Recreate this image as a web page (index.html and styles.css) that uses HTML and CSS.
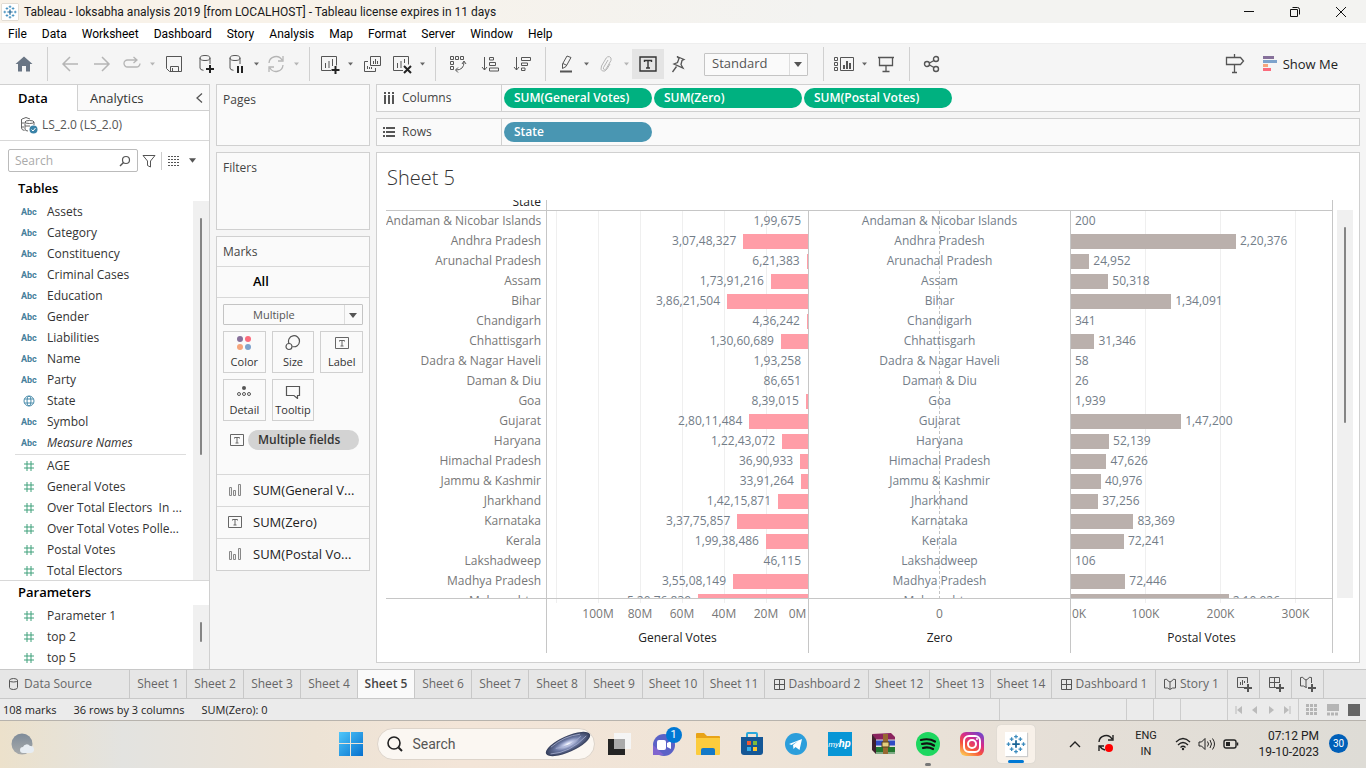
FILE: index.html
```html
<!DOCTYPE html>
<html lang="en">
<head>
<meta charset="utf-8">
<title>Tableau - loksabha analysis 2019</title>
<link rel="stylesheet" href="styles.css">
</head>
<body>
<svg class="defs" aria-hidden="true">
  <symbol id="caret" viewBox="0 0 8 5"><path d="M0 0h8L4 5z" fill="currentColor"/></symbol>
  <symbol id="hash" viewBox="0 0 12 12"><path d="M4 1v10M8 1v10M1 4h10M1 8h10" stroke="#3fa07a" fill="none"/></symbol>
  <symbol id="textmark" viewBox="0 0 14 12"><path d="M.5.5h13v11H.5z M4.500 4.500V3.500h5v1M7 3.500V9M5.500 9h3" stroke="#666" fill="none"/></symbol>
  <symbol id="bars" viewBox="0 0 14 14"><path d="M1.500 4.500h2v8h-2zM5.500 7.500h2v5h-2zM10.500 1.500h2v11h-2z" stroke="#888" fill="#eee"/></symbol>
  <symbol id="grid" viewBox="0 0 12 12"><path d="M1.500 1.500h10v10h-10zM6.500 1.500v10M1.500 6.500h10" stroke="#555" fill="none"/></symbol>
  <symbol id="tableau" viewBox="0 0 16 16"><path d="M8 5v6M5 8h6" stroke="#1c6596" stroke-width="1.400"/><path d="M8 .5v3M6.500 2h3M8 12.500v3M6.500 14h3M.5 8h3M2 6.500v3M12.500 8h3M14 6.500v3M4.500 2.500v3M3 4h3M11.500 2.500v3M10 4h3M4.500 10.500v3M3 12h3M11.500 10.500v3M10 12h3" stroke="#3b8bbd"/></symbol>
</svg>

<header class="titlebar">
  <span class="app-icon"><svg width="14" height="14"><use href="#tableau"/></svg></span>
  <h1>Tableau - loksabha analysis 2019 [from LOCALHOST] - Tableau license expires in 11 days</h1>
  <div class="window-buttons">
    <button aria-label="Minimize"><svg width="12" height="12"><path d="M1 5.500h10" stroke="#111"/></svg></button>
    <button aria-label="Restore"><svg width="12" height="12"><path d="M1.500 3.500h7v7h-7z" fill="none" stroke="#111"/><path d="M3.500 1.500h5q2 0 2 2v5" fill="none" stroke="#111"/></svg></button>
    <button aria-label="Close"><svg width="12" height="12"><path d="M1 1l10 10M11 1L1 11" stroke="#111"/></svg></button>
  </div>
</header>

<nav class="menubar">
  <button>File</button><button>Data</button><button>Worksheet</button><button>Dashboard</button><button>Story</button><button>Analysis</button><button>Map</button><button>Format</button><button>Server</button><button>Window</button><button>Help</button>
</nav>

<div class="toolbar">
  <button class="tool home" aria-label="Start page"><svg width="18" height="18"><path d="M9 1.500L17.500 9H15v7.500h-4V11H7v5.500H3V9H.5z" fill="#697584"/></svg></button>
  <i class="sep first"></i>
  <button class="tool faint" aria-label="Undo"><svg width="18" height="18"><path d="M17 9H2M9 2L2 9l7 7" stroke-width="1.500"/></svg></button>
  <button class="tool faint" aria-label="Redo"><svg width="18" height="18"><path d="M1 9h15M9 2l7 7-7 7" stroke-width="1.500"/></svg></button>
  <button class="tool drop faint" aria-label="Replay"><svg width="20" height="18"><path d="M14 5H5.500a3.500 3.500 0 0 0 0 7h9a3.500 3.500 0 0 0 3.500-3.500M11.500 2L15 5l-3.500 3" stroke-width="1.300"/></svg></button><button class="arrow faint" aria-label="Replay options"><svg><use href="#caret"/></svg></button>
  <button class="tool" aria-label="Save"><svg width="18" height="18"><path d="M1.500 1.500h15v15h-12l-3-3zM5.500 16.500v-5h8v5M7.500 13v3.500"/></svg></button>
  <button class="tool" aria-label="New data source"><svg width="18" height="20"><ellipse cx="8" cy="4" rx="5" ry="2.500"/><path d="M3 4v10q0 2 3.500 2.300M13 4v6"/><path d="M13 11v8M9 15h8" stroke="#222" stroke-width="2"/></svg></button>
  <button class="tool drop" aria-label="Pause updates"><svg width="18" height="20"><ellipse cx="8" cy="4" rx="5" ry="2.500"/><path d="M3 4v10q0 2 3.500 2.300M13 4v6"/><path d="M11 12v7M15 12v7" stroke="#222" stroke-width="2"/></svg></button><button class="arrow" aria-label="Update options"><svg><use href="#caret"/></svg></button>
  <button class="tool drop faint" aria-label="Run update"><svg width="18" height="18"><path d="M2 8a7 7 0 0 1 13-3M16 10a7 7 0 0 1-13 3M16 1v5h-5M2 17v-5h5" stroke-width="1.300"/></svg></button><button class="arrow faint" aria-label="Run options"><svg><use href="#caret"/></svg></button>
  <i class="sep"></i>
  <button class="tool drop" aria-label="New worksheet"><svg width="20" height="20"><path d="M11 16.500H1.500v-14h15v9M5.500 9v5M9 7v7M12.500 5v7"/><path d="M15.500 12v8M11.500 16h8" stroke="#222" stroke-width="2"/></svg></button><button class="arrow" aria-label="New sheet options"><svg><use href="#caret"/></svg></button>
  <button class="tool" aria-label="Duplicate"><svg width="18" height="18"><path d="M7.500 1.500h10v9h-10zM10.500 9V6M12.500 9V4M14.500 9V6M5 6.500H1.500v10h11V13M4.500 14v-3M6.500 14v-2M8.500 14v-2"/></svg></button>
  <button class="tool drop" aria-label="Clear sheet"><svg width="20" height="20"><path d="M11 16.500H1.500v-14h15v8M5.500 9v5M9 7v7M12.500 5v4"/><path d="M12 12l7 7M19 12l-7 7" stroke="#222" stroke-width="2"/></svg></button><button class="arrow" aria-label="Clear options"><svg><use href="#caret"/></svg></button>
  <i class="sep"></i>
  <button class="tool" aria-label="Swap rows and columns"><svg width="18" height="18"><path d="M1.500 1.500h3v3h-3zM6.500 1.500h3v3h-3zM11.500 1.500h3v3h-3zM1.500 6.500h3v3h-3zM1.500 11.500h3v3h-3zM7 15q8 0 8-8M13 9l2-3 2 3M9 12.500L6.500 15 9 17.500"/></svg></button>
  <button class="tool" aria-label="Sort ascending"><svg width="18" height="18"><path d="M3.500 2v13M1 12l2.500 3L6 12M8.500 2.500h4v2.500h-4zM8.500 7.500h6v3h-6zM8.500 13h9v3h-9z"/></svg></button>
  <button class="tool" aria-label="Sort descending"><svg width="18" height="18"><path d="M3.500 2v13M1 12l2.500 3L6 12M8.500 2.500h9v3h-9zM8.500 8h6v2.500h-6zM8.500 13h3.500v2.500H8.500z"/></svg></button>
  <i class="sep"></i>
  <button class="tool drop" aria-label="Highlight"><svg width="16" height="20"><path d="M9 2l4 1.500-5 9-3.500 2V10zM5 9.500l4 2"/><path d="M2 17.500h12" stroke-width="2"/></svg></button><button class="arrow" aria-label="Highlight options"><svg><use href="#caret"/></svg></button>
  <button class="tool drop faint" aria-label="Group members"><svg width="16" height="18"><path d="M10 5L5.500 12.500q-.5 2 1 2.200 1 0 1.800-1.200L13 5.500q.8-3-1.500-3.800-2-.5-3.300 1.300L3.500 11q-1.500 4 1 5 2.500 1 4.500-2l3-5"/></svg></button><button class="arrow faint" aria-label="Group options"><svg><use href="#caret"/></svg></button>
  <button class="tool pressed" aria-label="Show mark labels" aria-pressed="true"><svg width="18" height="16"><path d="M1 1h16v14H1zM5.500 6V4.500h7V6M9 4.500V12M7 12h4" stroke="#333" stroke-width="1.400"/></svg></button>
  <button class="tool drop" aria-label="Fix axes"><svg width="16" height="18"><path d="M7 1.500l7 3-2 1-1 4 2 3.500-9-4 3.500-1.500 1.500-4zM6.500 11.500L2.500 17" stroke-width="1.300"/></svg></button>
  <div class="select fit"><select aria-label="Fit"><option>Standard</option></select><svg><use href="#caret"/></svg></div>
  <i class="sep after-select"></i>
  <button class="tool drop" aria-label="Show cards"><svg width="22" height="18"><path d="M1.500 2.500h3v3h-3zM1.500 7.500h3v3h-3zM1.500 12.500h3v3h-3zM7.500 2.500h13v13h-13z"/><path d="M11 14v-4M14 14V6M17 14V8" stroke-width="2"/></svg></button><button class="arrow" aria-label="Card options"><svg><use href="#caret"/></svg></button>
  <button class="tool" aria-label="Presentation mode"><svg width="18" height="18"><path d="M1 2.500h16M2.500 2.500v8h13v-8M9 10.500V16M5.500 16.500h7" stroke-width="1.300"/></svg></button>
  <i class="sep"></i>
  <button class="tool" aria-label="Share"><svg width="18" height="18"><g stroke-width="1.400"><circle cx="4" cy="9" r="2.500"/><circle cx="13" cy="4" r="2.500"/><circle cx="13" cy="14" r="2.500"/><path d="M6.500 8L11 5.500M6.500 10L11 12.500"/></g></svg></button>
  <span class="grow"></span>
  <button class="tool" aria-label="Guide"><svg width="20" height="20"><path d="M9.500 0v3M1.500 3.500h14l3 3.500-3 3.500h-14zM9.500 10.500v8M7 18.500h5" stroke-width="1.300"/></svg></button>
  <button class="show-me"><svg width="14" height="16"><path d="M0 0h11v3H0z" fill="#86709a"/><path d="M0 4h14v3H0z" fill="#7ea3cc"/><path d="M0 8h5v3H0z" fill="#f6a57c"/><path d="M0 12h8v3H0z" fill="#fb6b7c"/></svg>Show Me</button>
</div>

<main class="workspace">
  <aside class="data-pane">
    <div class="pane-tabs"><button class="active">Data</button><button>Analytics</button><button class="collapse" aria-label="Collapse pane"><svg width="8" height="12"><path d="M7 1.500L2 6l5 4.500" fill="none" stroke="#555" stroke-width="1.300"/></svg></button></div>
    <button class="source"><svg width="18" height="18" fill="none" stroke="#666"><path d="M2 3q4-3 8 0M1.500 3v9q0 2 3 2.500M2 7h2M2 11h2M5 6q0-1.500 4.500-1.500T14 6v3M5 6q0 1.500 4.500 1.500T14 6M5 6v7q0 2 3 2M5 10h5"/><circle cx="13.500" cy="13.500" r="4" fill="#3a83a8" stroke="none"/><path d="M11.500 13.500l1.500 1.500 2.500-3" stroke="#fff"/></svg>LS_2.0 (LS_2.0)</button>
    <div class="finder">
      <div class="search-field"><input type="text" placeholder="Search" aria-label="Search fields"><svg width="12" height="12"><circle cx="7" cy="5" r="3.500" fill="none" stroke="#555" stroke-width="1.200"/><path d="M4.500 7.500L1 11" stroke="#555" stroke-width="1.500"/></svg></div>
      <button aria-label="Filter fields"><svg width="14" height="14"><path d="M1 1.500h12L8.500 7v6l-3-1.500V7z" fill="none" stroke="#555"/></svg></button>
      <i></i>
      <button class="view" aria-label="View as list"><svg width="12" height="10"><path d="M0 .5h12M0 3.500h12M0 6.500h12M0 9.500h12" stroke="#555" stroke-dasharray="2 1"/></svg><svg class="small-caret"><use href="#caret"/></svg></button>
    </div>
    <h2>Tables</h2>
    <div class="scroller fields">
      <div class="list">
        <ul>
          <li><b>Abc</b>Assets</li><li><b>Abc</b>Category</li><li><b>Abc</b>Constituency</li><li><b>Abc</b>Criminal Cases</li><li><b>Abc</b>Education</li><li><b>Abc</b>Gender</li><li><b>Abc</b>Liabilities</li><li><b>Abc</b>Name</li><li><b>Abc</b>Party</li>
          <li><svg width="12" height="12" fill="none" stroke="#4a8cab"><circle cx="6" cy="6" r="5"/><ellipse cx="6" cy="6" rx="2" ry="5"/><path d="M1.500 4h9M1.500 8h9"/></svg>State</li>
          <li><b>Abc</b>Symbol</li><li><b>Abc</b><em>Measure Names</em></li>
        </ul>
        <ul class="measures">
          <li><svg><use href="#hash"/></svg>AGE</li><li><svg><use href="#hash"/></svg>General Votes</li><li><svg><use href="#hash"/></svg>Over Total Electors&nbsp; In ...</li><li><svg><use href="#hash"/></svg>Over Total Votes Polle...</li><li><svg><use href="#hash"/></svg>Postal Votes</li><li><svg><use href="#hash"/></svg>Total Electors</li>
        </ul>
      </div>
      <div class="track"><i class="thumb"></i></div>
    </div>
    <h2 class="params-title">Parameters</h2>
    <div class="scroller params">
      <div class="list"><ul><li><svg><use href="#hash"/></svg>Parameter 1</li><li><svg><use href="#hash"/></svg>top 2</li><li><svg><use href="#hash"/></svg>top 5</li></ul></div>
      <div class="track"><i class="thumb"></i></div>
    </div>
  </aside>

  <section class="cards">
    <div class="card pages"><h3>Pages</h3></div>
    <div class="card filters"><h3>Filters</h3></div>
    <div class="card marks">
      <h3>Marks</h3>
      <button class="mark-all">All</button>
      <div class="mark-body">
        <div class="select type"><select aria-label="Mark type"><option>Multiple</option></select><svg><use href="#caret"/></svg></div>
        <div class="mark-grid">
          <button><svg width="16" height="16"><circle cx="4" cy="4" r="3" fill="#86709a"/><circle cx="12" cy="4" r="3" fill="#fb6b7c"/><circle cx="4" cy="12" r="3" fill="#f6a57c"/><circle cx="12" cy="12" r="3" fill="#7ea3cc"/></svg>Color</button>
          <button><svg width="16" height="16" fill="none" stroke="#555" stroke-width="1.200"><path d="M4 8.500A5.500 5.500 0 1 1 7.500 11.500"/><circle cx="4" cy="11.500" r="3"/></svg>Size</button>
          <button><svg width="14" height="16" viewBox="0 0 14 12"><use href="#textmark"/></svg>Label</button>
          <button><svg width="16" height="16" fill="none" stroke="#555"><circle cx="8" cy="5" r="2" fill="#555" stroke="none"/><circle cx="3" cy="11" r="1.500"/><circle cx="8" cy="11" r="1.500"/><circle cx="13" cy="11" r="1.500"/></svg>Detail</button>
          <button><svg width="16" height="16"><path d="M1.500 3.500h13v9h-2v3l-3.500-3H1.500z" fill="none" stroke="#555" stroke-width="1.200"/></svg>Tooltip</button>
        </div>
        <div class="label-row"><svg width="14" height="12"><use href="#textmark"/></svg><button class="pill grey">Multiple fields</button></div>
      </div>
      <button class="layer"><svg width="14" height="14"><use href="#bars"/></svg>SUM(General V...</button>
      <button class="layer"><svg width="14" height="12"><use href="#textmark"/></svg>SUM(Zero)</button>
      <button class="layer"><svg width="14" height="14"><use href="#bars"/></svg>SUM(Postal Vo...</button>
    </div>
  </section>

  <section class="view-area">
    <div class="shelf"><h3><svg width="12" height="12" stroke="#555" stroke-width="2"><path d="M2 0v2M6 0v2M10 0v2M2 3v9M6 3v9M10 3v9"/></svg>Columns</h3><button class="pill green">SUM(General Votes)</button><button class="pill green">SUM(Zero)</button><button class="pill green">SUM(Postal Votes)</button></div>
    <div class="shelf"><h3><svg width="12" height="12" stroke="#555" stroke-width="2"><path d="M0 2h2M0 6h2M0 10h2M3 2h9M3 6h9M3 10h9"/></svg>Rows</h3><button class="pill blue">State</button></div>
    <div class="sheet">
      <h2>Sheet 5</h2>
      <div class="viz">
        <div class="chart">
          <div class="plot">
          <table>
            <thead><tr><th class="state"><div>State</div></th><th></th><th></th><th></th></tr></thead>
            <tbody>
              <tr><th>Andaman &amp; Nicobar Islands</th><td class="gen"><div>1,99,675<i style="width:0%"></i></div></td><td class="zero">Andaman &amp; Nicobar Islands</td><td class="post"><div><i style="width:0%"></i>200</div></td></tr>
              <tr><th>Andhra Pradesh</th><td class="gen"><div>3,07,48,327<i style="width:24.8%"></i></div></td><td class="zero">Andhra Pradesh</td><td class="post"><div><i style="width:63.2%"></i>2,20,376</div></td></tr>
              <tr><th>Arunachal Pradesh</th><td class="gen"><div>6,21,383<i style="width:0.5%"></i></div></td><td class="zero">Arunachal Pradesh</td><td class="post"><div><i style="width:7%"></i>24,952</div></td></tr>
              <tr><th>Assam</th><td class="gen"><div>1,73,91,216<i style="width:14.2%"></i></div></td><td class="zero">Assam</td><td class="post"><div><i style="width:14.3%"></i>50,318</div></td></tr>
              <tr><th>Bihar</th><td class="gen"><div>3,86,21,504<i style="width:31%"></i></div></td><td class="zero">Bihar</td><td class="post"><div><i style="width:38.4%"></i>1,34,091</div></td></tr>
              <tr><th>Chandigarh</th><td class="gen"><div>4,36,242<i style="width:0.4%"></i></div></td><td class="zero">Chandigarh</td><td class="post"><div><i style="width:0%"></i>341</div></td></tr>
              <tr><th>Chhattisgarh</th><td class="gen"><div>1,30,60,689<i style="width:10.4%"></i></div></td><td class="zero">Chhattisgarh</td><td class="post"><div><i style="width:9%"></i>31,346</div></td></tr>
              <tr><th>Dadra &amp; Nagar Haveli</th><td class="gen"><div>1,93,258<i style="width:0%"></i></div></td><td class="zero">Dadra &amp; Nagar Haveli</td><td class="post"><div><i style="width:0%"></i>58</div></td></tr>
              <tr><th>Daman &amp; Diu</th><td class="gen"><div>86,651<i style="width:0%"></i></div></td><td class="zero">Daman &amp; Diu</td><td class="post"><div><i style="width:0%"></i>26</div></td></tr>
              <tr><th>Goa</th><td class="gen"><div>8,39,015<i style="width:0.8%"></i></div></td><td class="zero">Goa</td><td class="post"><div><i style="width:0%"></i>1,939</div></td></tr>
              <tr><th>Gujarat</th><td class="gen"><div>2,80,11,484<i style="width:22.5%"></i></div></td><td class="zero">Gujarat</td><td class="post"><div><i style="width:42.2%"></i>1,47,200</div></td></tr>
              <tr><th>Haryana</th><td class="gen"><div>1,22,43,072<i style="width:9.9%"></i></div></td><td class="zero">Haryana</td><td class="post"><div><i style="width:14.6%"></i>52,139</div></td></tr>
              <tr><th>Himachal Pradesh</th><td class="gen"><div>36,90,933<i style="width:3%"></i></div></td><td class="zero">Himachal Pradesh</td><td class="post"><div><i style="width:13.6%"></i>47,626</div></td></tr>
              <tr><th>Jammu &amp; Kashmir</th><td class="gen"><div>33,91,264<i style="width:2.7%"></i></div></td><td class="zero">Jammu &amp; Kashmir</td><td class="post"><div><i style="width:11.5%"></i>40,976</div></td></tr>
              <tr><th>Jharkhand</th><td class="gen"><div>1,42,15,871<i style="width:11.5%"></i></div></td><td class="zero">Jharkhand</td><td class="post"><div><i style="width:10.4%"></i>37,256</div></td></tr>
              <tr><th>Karnataka</th><td class="gen"><div>3,37,75,857<i style="width:27.1%"></i></div></td><td class="zero">Karnataka</td><td class="post"><div><i style="width:23.9%"></i>83,369</div></td></tr>
              <tr><th>Kerala</th><td class="gen"><div>1,99,38,486<i style="width:16.1%"></i></div></td><td class="zero">Kerala</td><td class="post"><div><i style="width:20.3%"></i>72,241</div></td></tr>
              <tr><th>Lakshadweep</th><td class="gen"><div>46,115<i style="width:0%"></i></div></td><td class="zero">Lakshadweep</td><td class="post"><div><i style="width:0%"></i>106</div></td></tr>
              <tr><th>Madhya Pradesh</th><td class="gen"><div>3,55,08,149<i style="width:28.7%"></i></div></td><td class="zero">Madhya Pradesh</td><td class="post"><div><i style="width:20.8%"></i>72,446</div></td></tr>
              <tr><th>Maharashtra</th><td class="gen"><div>5,20,76,839<i style="width:42.1%"></i></div></td><td class="zero">Maharashtra</td><td class="post"><div><i style="width:60.4%"></i>2,10,926</div></td></tr>
            </tbody>
          </table>
          </div>
          <div class="axes">
            <div></div>
            <div class="axis gen-axis"><p><span>0M</span><span>20M</span><span>40M</span><span>60M</span><span>80M</span><span>100M</span></p><h4>General Votes</h4></div>
            <div class="axis zero-axis"><p><span>0</span></p><h4>Zero</h4></div>
            <div class="axis post-axis"><p><span>0K</span><span>100K</span><span>200K</span><span>300K</span></p><h4>Postal Votes</h4></div>
          </div>
        </div>
        <div class="track"><i class="thumb"></i></div>
      </div>
    </div>
  </section>
</main>

<nav class="sheet-tabs">
  <button class="source-tab"><svg width="12" height="14"><path d="M1.500 3.500q0-2 4-2t4 2v7q0 2-4 2t-4-2zM1.500 3.500q0 1.500 4 1.500t4-1.500" fill="none" stroke="#555"/></svg>Data Source</button>
  <button>Sheet 1</button><button>Sheet 2</button><button>Sheet 3</button><button>Sheet 4</button><button class="current">Sheet 5</button><button>Sheet 6</button><button>Sheet 7</button><button>Sheet 8</button><button>Sheet 9</button><button class="wide">Sheet 10</button><button class="wide">Sheet 11</button>
  <button class="dash"><svg width="12" height="12"><use href="#grid"/></svg>Dashboard 2</button>
  <button class="wide">Sheet 12</button><button class="wide">Sheet 13</button><button class="wide">Sheet 14</button>
  <button class="dash"><svg width="12" height="12"><use href="#grid"/></svg>Dashboard 1</button>
  <button class="story"><svg width="12" height="12"><path d="M.5 1.500q3-1 3 1M11.500 1.500q-3-1-3 1M.5 1.500v8.500h3l2.500 1.500L8.500 10h3V1.500M3.500 2.500L6 4l2.500-1.500M6 4v7" fill="none" stroke="#555"/></svg>Story 1</button>
  <button class="new" aria-label="New worksheet"><svg width="16" height="16"><path d="M8 11.500H1.500v-10h10V7M4.500 9V6M6.500 9V4M8.500 7V5" fill="none" stroke="#555"/><path d="M12 8v8M8 12h8" stroke="#555" stroke-width="2"/></svg></button>
  <button class="new" aria-label="New dashboard"><svg width="16" height="16"><path d="M8 11.500H1.500v-10h10V7M6.500 1.500v10M1.500 6.500h10" fill="none" stroke="#555"/><path d="M12 8v8M8 12h8" stroke="#555" stroke-width="2"/></svg></button>
  <button class="new" aria-label="New story"><svg width="16" height="16"><path d="M7 11l-1 .5L3.500 10h-3V1.500q3-1 3 1L6 4l2.500-1.500q0-2 3-1V7M6 4v7" fill="none" stroke="#555"/><path d="M12 8v8M8 12h8" stroke="#555" stroke-width="2"/></svg></button>
</nav>

<footer class="status">
  <span>108 marks</span><span>36 rows by 3 columns</span><span>SUM(Zero): 0</span>
  <div class="status-right">
    <i class="cell-a"></i><i></i><i></i><i class="cell-b"></i>
    <div class="pager"><button aria-label="First"><svg width="8" height="8"><path d="M1 0v8" stroke="#bbb"/><path d="M7 0v8L2 4z" fill="#bbb"/></svg></button><button aria-label="Previous"><svg width="8" height="8"><path d="M6 0v8L1 4z" fill="#bbb"/></svg></button><button aria-label="Next"><svg width="8" height="8"><path d="M2 0v8l5-4z" fill="#bbb"/></svg></button><button aria-label="Last"><svg width="8" height="8"><path d="M7 0v8" stroke="#bbb"/><path d="M1 0v8l5-4z" fill="#bbb"/></svg></button></div>
    <div class="modes"><button aria-label="Sheet sorter"><svg width="12" height="12"><path d="M0 1.500h12M0 5.500h12M0 9.500h12" stroke="#b5b5b5" stroke-width="3" stroke-dasharray="3 1"/></svg></button><button aria-label="Filmstrip"><svg width="12" height="12"><path d="M0 0h12v7H0z" fill="#b5b5b5"/><path d="M0 10h12" stroke="#b5b5b5" stroke-width="3" stroke-dasharray="3 1"/></svg></button><button aria-label="Tabs"><svg width="12" height="12"><path d="M0 0h12v12H0z" fill="#666"/></svg></button></div>
  </div>
</footer>

<footer class="taskbar">
  <button class="task weather" aria-label="Weather"><svg width="24" height="24"><defs><linearGradient id="moon" x2="0" y2="1"><stop stop-color="#7e8b99"/><stop offset="1" stop-color="#a7aaab"/></linearGradient></defs><circle cx="12" cy="12" r="10.500" fill="url(#moon)"/><path d="M13 21a3 3 0 0 1 0-6 4 4 0 0 1 7-1 3.500 3.500 0 0 1 1 7z" fill="#e7edf3"/></svg></button>
  <div class="apps">
    <button class="task" aria-label="Start"><svg width="24" height="24"><defs><linearGradient id="win" x2="1" y2="1"><stop stop-color="#4fc7fa"/><stop offset="1" stop-color="#0670ce"/></linearGradient></defs><path d="M0 0h11v11H0zM12 0h12v11H12zM0 12h11v12H0zM12 12h12v12H12z" fill="url(#win)"/></svg></button>
    <button class="win-search"><svg width="18" height="18"><circle cx="8" cy="8" r="6" fill="none" stroke="#222" stroke-width="1.600"/><path d="M12.500 12.500L16 16" stroke="#222" stroke-width="2"/></svg><span>Search</span><svg width="50" height="28"><defs><radialGradient id="gal"><stop stop-color="#fff"/><stop offset=".2" stop-color="#c3cbea"/><stop offset=".55" stop-color="#6e7ba6"/><stop offset="1" stop-color="#333c58"/></radialGradient></defs><g transform="rotate(-24 25 14)"><ellipse cx="25" cy="14" rx="24" ry="8" fill="url(#gal)"/><path d="M5 16q18 7 40-2M8 10q17-5 32 0M12 13q14 5 28-1" fill="none" stroke="#aab2d2" stroke-width=".7"/></g></svg></button>
    <button class="task" aria-label="Task view"><svg width="24" height="24"><path d="M0 7h17v16H0z" fill="#242424"/><path d="M6 1h17v16H6z" fill="#f5f5f5"/><path d="M6 7h11v10H6z" fill="#aaa"/></svg></button>
    <button class="task chat" aria-label="Chat"><svg width="26" height="26"><circle cx="13" cy="14" r="11" fill="#5b62c7"/><path d="M2 14v10h11z" fill="#8065cf"/><rect x="6" y="9" width="9" height="10" rx="2" fill="#fff"/><path d="M16 12l4-2v8l-4-2z" fill="#fff"/></svg><span>1</span></button>
    <button class="task" aria-label="File Explorer"><svg width="26" height="24"><path d="M1 2q0-1 1-1h7l3 3h12q1 0 1 1v5H1z" fill="#e8a317"/><path d="M1 6h24v16q0 1-1 1H2q-1 0-1-1z" fill="#fccc3d"/><path d="M6 23v-5q0-2 2-2h10q2 0 2 2v5z" fill="#1479c7"/></svg></button>
    <button class="task" aria-label="Microsoft Store"><svg width="24" height="26"><path d="M7 7V3q0-1 1-1h8q1 0 1 1v4" fill="none" stroke="#29a8dc" stroke-width="2"/><path d="M1 6h22v15q0 3-3 3H4q-3 0-3-3z" fill="#155796"/><path d="M7 10h4v4H7z" fill="#f15a33"/><path d="M13 10h4v4h-4z" fill="#7fba3b"/><path d="M7 16h4v4H7z" fill="#34aeea"/><path d="M13 16h4v4h-4z" fill="#ffc52c"/></svg></button>
    <button class="task" aria-label="Telegram"><svg width="24" height="24"><circle cx="12" cy="12" r="11" fill="#2c9edb"/><path d="M5 12l13-5-2.500 11-4-3-2 2-.5-4 5-4-6.500 4z" fill="#fff"/></svg></button>
    <button class="task" aria-label="myHP"><span class="hp">my<b>hp</b></span></button>
    <button class="task" aria-label="WinRAR"><svg width="26" height="24"><path d="M1 2l19-1 4 4v3H5z" fill="#8b245f"/><path d="M2 8h22v6H5z" fill="#304cc5"/><path d="M2 15h22v7H5z" fill="#23782f"/><path d="M1 2l4 5v15l-4-4z" fill="#40202d"/><path d="M5 8h19M5 14h19M5 21h19" stroke="#ddd"/><path d="M12 2h5v20h-5z" fill="#986831"/><path d="M11 10h7v5h-7z" fill="#e5cf7f" stroke="#594021"/></svg></button>
    <button class="task running" aria-label="Spotify"><svg width="24" height="24"><circle cx="12" cy="12" r="12" fill="#1ed760"/><path d="M5 8q8-2 14 1.500M6 12q7-2 12 1.500M7 16q5-1.500 10 1" fill="none" stroke="#111" stroke-width="2.200" stroke-linecap="round"/></svg></button>
    <button class="task" aria-label="Instagram"><svg width="24" height="24"><defs><linearGradient id="ig" x1=".2" y1="1" x2=".8" y2="0"><stop stop-color="#fdc652"/><stop offset=".35" stop-color="#f6523c"/><stop offset=".65" stop-color="#d62a8b"/><stop offset="1" stop-color="#7046cb"/></linearGradient></defs><rect width="24" height="24" rx="6" fill="url(#ig)"/><rect x="4" y="4" width="16" height="16" rx="5" fill="none" stroke="#fff" stroke-width="2"/><circle cx="12" cy="12" r="4" fill="none" stroke="#fff" stroke-width="2"/><circle cx="17" cy="7" r="1" fill="#fff"/></svg></button>
    <button class="task active-app" aria-label="Tableau"><span class="tableau-tile"><svg width="20" height="20"><use href="#tableau"/></svg></span></button>
  </div>
  <div class="tray">
    <button class="chevron" aria-label="Show hidden icons"><svg width="12" height="8"><path d="M1 7l5-5 5 5" fill="none" stroke="#222" stroke-width="1.400"/></svg></button>
    <button class="sync" aria-label="Updates"><svg width="20" height="20"><path d="M2 8a7 7 0 0 1 13-3M16 1v5h-5M8 16a7 7 0 0 1-5-4M2 17v-5h5" fill="none" stroke="#222" stroke-width="1.400"/><circle cx="12" cy="14" r="4" fill="#f00"/></svg></button>
    <button class="lang">ENG<br>IN</button>
    <button class="net" aria-label="Network, volume and battery"><svg width="16" height="14"><path d="M1 5q7-7 14 0M3 8q5-5 10 0M5.500 10.500q2.500-2.500 5 0" fill="none" stroke="#222" stroke-width="1.300"/><circle cx="8" cy="12" r="1.200" fill="#222"/></svg><svg width="18" height="14"><path d="M1 5h2.500L7 1.500v11L3.500 9H1zM9.500 4.500q2 2.500 0 5M12 3q3 4 0 8M14.500 1.500q4 5.500 0 11" fill="none" stroke="#222"/></svg><svg width="16" height="12"><rect x="1" y="2" width="12" height="8" rx="2" fill="none" stroke="#222" stroke-width="1.400"/><path d="M3 4h4v4H3z" fill="#222"/><path d="M14.500 4.500v3" stroke="#222" stroke-width="1.500"/></svg></button>
    <button class="clock">07:12 PM<br>19-10-2023</button>
    <button class="count">30</button>
  </div>
</footer>
</body>
</html>
```
FILE: styles.css
```css
* { box-sizing: border-box; }
body { margin: 0; height: 100vh; display: flex; flex-direction: column; overflow: hidden; background: #f5f5f5; color: #333; font: 12px/16px "Open Sans", "Noto Sans", sans-serif; }
h1, h2, h3, h4, p, ul { margin: 0; padding: 0; font-size: inherit; font-weight: 400; }
button { font: inherit; color: inherit; background: none; border: 0; margin: 0; padding: 0; white-space: nowrap; }
svg { flex: none; display: block; }
.defs { width: 0; height: 0; position: absolute; }

.titlebar { height: 23px; flex: none; display: flex; align-items: center; padding-left: 2px; background: linear-gradient(90deg, #f8f2e9 20%, #f3f3f1 60%); color: #191919; }
.app-icon { width: 16px; height: 16px; display: flex; align-items: center; justify-content: center; background: #fff; box-shadow: 0 0 1px #777; }
.titlebar h1 { margin-left: 6px; font: 12px/16px Roboto, sans-serif; }
.window-buttons { margin-left: auto; display: flex; padding-right: 2px; }
.window-buttons button { width: 46px; height: 20px; display: flex; align-items: center; justify-content: center; }

.menubar { height: 20px; flex: none; display: flex; background: #fff; gap: 15px; padding-left: 8px; color: #000; font: 12px/22px Roboto, sans-serif; }

.toolbar { height: 41px; flex: none; display: flex; align-items: center; border-top: 1px solid #eee; }
.tool { width: 32px; height: 30px; display: flex; align-items: center; justify-content: center; }
.tool svg { fill: none; stroke: #555; }
.tool.home { width: 47px; }
.tool.home svg { stroke: none; }
.tool.drop { width: 28px; }
.tool.faint svg { stroke: #b5b5b5; }
.tool.pressed { background: #e4e4e4; }
.arrow { width: 12px; height: 30px; display: flex; align-items: center; justify-content: center; color: #666; }
.arrow.faint { color: #b5b5b5; }
.arrow svg { width: 5px; height: 4px; }
.sep { width: 1px; height: 34px; background: #d0d0d0; margin: 0 6px 0 7px; flex: none; }
.sep.first { margin-left: 0; }
.sep.after-select { margin-left: 15px; }
.grow { flex: 1; }
.select { position: relative; display: flex; background: #fafafa; border: 1px solid #c4c4c4; border-radius: 1px; }
.select select { appearance: none; width: 100%; border: 0; background: none; font: inherit; color: #555; }
.select svg { position: absolute; right: 5px; top: 50%; width: 8px; height: 5px; margin-top: -2px; color: #555; }
.select::after { content: ""; position: absolute; right: 17px; top: 0; bottom: 0; width: 1px; background: #ddd; }
.fit { width: 104px; height: 23px; margin-left: 12px; font-size: 13px; }
.fit select { padding: 0 7px 2px; }
.show-me { display: flex; align-items: center; gap: 6px; margin: 0 28px 0 12px; font-size: 13px; color: #222; }

.workspace { flex: 1; min-height: 0; display: flex; gap: 6px; padding-right: 6px; }
.data-pane { width: 210px; flex: none; display: flex; flex-direction: column; background: #fff; border: solid #d0d0d0; border-width: 1px 1px 0 0; }
.pane-tabs { height: 26px; flex: none; display: flex; font-size: 13px; }
.pane-tabs button { padding: 0 12px; background: #fafafa; border-bottom: 1px solid #d0d0d0; }
.pane-tabs .active { width: 78px; padding: 0 18px; text-align: left; background: #fff; font-weight: 600; color: #000; border-bottom: 0; border-right: 1px solid #d0d0d0; }
.pane-tabs .collapse { margin-left: auto; flex: 1; display: flex; align-items: center; justify-content: flex-end; padding: 0 6px; }
.source { height: 30px; flex: none; display: flex; align-items: center; gap: 4px; padding: 0 0 2px 20px; border-bottom: 1px solid #d8d8d8; color: #555; }
.finder { flex: none; display: flex; align-items: center; padding: 8px 8px 0; }
.search-field { width: 130px; height: 23px; display: flex; align-items: center; padding-right: 6px; border: 1px solid #bbb; border-radius: 2px; }
.search-field input { flex: 1; min-width: 0; border: 0; padding: 0 6px; font: inherit; }
.search-field input::placeholder { color: #aaa; }
.finder > button { margin-left: 4px; }
.finder > i { width: 1px; height: 18px; margin: 0 2px 0 5px; background: #ccc; }
.finder .view { display: flex; align-items: center; gap: 9px; }
.small-caret { width: 7px; height: 5px; color: #555; }
.data-pane h2 { flex: none; padding: 8px 18px 5px; font-size: 13px; font-weight: 600; color: #000; }
.scroller { display: flex; min-height: 0; }
.fields { flex: 1; }
.list { flex: 1; min-width: 0; overflow: hidden; }
.list ul { list-style: none; }
.list li { height: 21px; display: flex; align-items: center; padding-left: 21px; gap: 10px; white-space: nowrap; }
.list b { width: 16px; font: 700 9px/18px Roboto, sans-serif; color: #457f9b; }
.list svg { width: 12px; height: 12px; margin: 0 2px; }
.list .measures { border-top: 1px solid #ddd; margin: 1px 7px 0 15px; }
.measures li { padding-left: 6px; }
.track { width: 16px; flex: none; background: #f0f0f0; display: flex; justify-content: center; }
.thumb { width: 2px; background: #858585; border-radius: 1px; }
.fields .thumb { margin-top: 17px; height: 237px; }
.data-pane .params-title { border-top: 1px solid #d8d8d8; padding: 3px 18px 5px; }
.params { height: 64px; flex: none; }
.params .thumb { margin-top: 17px; height: 20px; }

.cards { width: 154px; flex: none; display: flex; flex-direction: column; gap: 6px; }
.card { border: 1px solid #d0d0d0; background: #fafafa; }
.card h3 { padding: 7px 6px; color: #444; }
.marks h3 { padding-bottom: 6px; }
.pages { height: 62px; }
.filters { height: 78px; }
.marks button { display: flex; align-items: center; }
.mark-all { width: 100%; height: 32px; border: solid #d8d8d8; border-width: 1px 0; font-size: 13px; font-weight: 600; color: #000; }
.marks .mark-all { padding: 0 0 2px 36px; }
.mark-body { padding: 6px 6px 24px; }
.type { height: 21px; font-size: 11px; }
.type select { padding: 0 29px; }
.type, .type select { line-height: 16px; }
.mark-grid { display: grid; grid-template-columns: repeat(3, 1fr); gap: 6px; margin-top: 6px; }
.mark-grid button { height: 42px; flex-direction: column; justify-content: center; gap: 3px; border: 1px solid #d0d0d0; font-size: 11px; color: #333; }
.label-row { display: flex; align-items: center; gap: 4px; margin-top: 9px; padding: 0 4px 0 7px; }
.label-row .pill { flex: 1; }
.pill { height: 20px; border-radius: 10px; padding: 0 10px; font-weight: 600; text-align: left; }
.pill.grey { background: #d3d3d3; color: #333; }
.pill.green, .pill.blue { width: 148px; color: #fff; }
.pill.green { background: #00b180; }
.pill.blue { background: #4996b2; }
.layer { width: 100%; height: 32px; gap: 11px; border-top: 1px solid #d8d8d8; font-size: 13px; color: #222; }
.marks .layer { padding: 0 0 2px 11px; }

.view-area { flex: 1; min-width: 0; display: flex; flex-direction: column; gap: 6px; padding-bottom: 6px; }
.shelf { height: 28px; flex: none; display: flex; align-items: center; gap: 2px; background: #fafafa; border: 1px solid #d0d0d0; }
.shelf h3 { width: 125px; height: 26px; display: flex; align-items: center; gap: 7px; padding-left: 6px; border-right: 1px solid #d0d0d0; color: #444; }
.sheet { flex: 1; min-height: 0; display: flex; flex-direction: column; background: #fff; border: 1px solid #d0d0d0; padding: 11px 6px 9px 9px; }
.sheet h2 { height: 36px; flex: none; padding-left: 1px; font-size: 20px; line-height: 28px; font-weight: 300; }
.viz { flex: 1; min-height: 0; display: flex; gap: 4px; }
.viz .track { margin: 10px 0 55px; }
.viz .thumb { margin-top: 17px; height: 196px; }
.chart { flex: 1; min-width: 0; display: flex; flex-direction: column; border-right: 1px solid #c6c6c6; }
.plot { flex: 1; min-height: 0; overflow: hidden; }
table { width: 100%; table-layout: fixed; border-spacing: 0; color: #777; }
th, td { padding: 0; font-weight: inherit; white-space: nowrap; line-height: 20px; }
thead th { height: 11px; border-bottom: 1px solid #c6c6c6; }
.state { width: 160px; }
.state div { height: 10px; line-height: 3px; padding-right: 5px; overflow: hidden; text-align: right; color: #222; }
thead .state + th { border-left: 1px solid #c6c6c6; }
tbody th { height: 20px; text-align: right; padding-right: 5px; font-weight: 400; }
td { border-left: 1px solid #c6c6c6; color: #737d88; }
td div { height: 20px; display: flex; align-items: center; }
td i { height: 15px; flex: none; }
.gen { background: repeating-linear-gradient(to left, transparent 0 41px, #efefef 41px 42px); }
.gen div { justify-content: flex-end; gap: 7px; }
.gen i { background: #ff9da7; }
.zero { text-align: center; background: linear-gradient(#c4c4c4 3px, transparent 3px) 50% 0 / 1px 5px repeat-y; }
.post { background: repeating-linear-gradient(to right, transparent 0 74px, #efefef 74px 75px); }
.post div { gap: 4px; }
.post i { background: #bab0ac; }
.axes { height: 55px; flex: none; display: grid; grid-template-columns: 160px 1fr 1fr 1fr; border-top: 1px solid #c6c6c6; color: #777; }
.axis { border-left: 1px solid #c6c6c6; overflow: hidden; text-align: center; }
.axis p { display: flex; padding-top: 6px; line-height: 18px; }
.axis h4 { line-height: 18px; margin-top: 6px; color: #222; }
.gen-axis { background: repeating-linear-gradient(to left, transparent 0 41px, #efefef 41px 42px) 0 0 / 100% 4px no-repeat; }
.post-axis { background: repeating-linear-gradient(to right, transparent 0 74px, #efefef 74px 75px) 0 0 / 100% 4px no-repeat; }
.gen-axis p { flex-direction: row-reverse; }
.axis span { flex: none; width: 42px; }
.gen-axis span:first-child { width: 21px; }
.zero-axis p { justify-content: center; }
.post-axis span { width: 75px; }
.post-axis span:first-child { width: 37px; text-align: left; padding-left: 1px; }

.sheet-tabs { height: 30px; flex: none; display: flex; background: #e6e6e6; border: solid #c8c8c8; border-width: 1px 0; color: #666; }
.sheet-tabs button { width: 57px; flex: none; display: flex; align-items: center; justify-content: center; gap: 4px; border-right: 1px solid #c8c8c8; }
.sheet-tabs .source-tab { width: 130px; justify-content: flex-start; padding-left: 8px; }
.sheet-tabs .current { background: #fafafa; font-weight: 600; color: #444; }
.sheet-tabs .wide { width: 61px; }
.sheet-tabs .dash { width: 104px; }
.sheet-tabs .story { width: 72px; }
.sheet-tabs .new { width: 32px; }

.status { height: 21px; flex: none; display: flex; align-items: center; gap: 17px; padding-left: 3px; background: #ebebeb; font-size: 11px; color: #222; }
.status-right { margin-left: auto; align-self: stretch; display: flex; }
.status-right > * { border-left: 1px solid #ccc; width: 27px; }
.status-right .cell-a { width: 127px; }
.status-right .cell-b { width: 47px; }
.status-right .pager { width: 71px; display: flex; align-items: center; justify-content: center; gap: 8px; }
.status-right .modes { width: 68px; display: flex; align-items: center; justify-content: center; gap: 9px; }

.taskbar { height: 48px; flex: none; display: grid; grid-template-columns: 1fr auto 1fr; align-items: center; padding-bottom: 2px; border-top: 1px solid #b7b3ad; background: linear-gradient(90deg, #ece1cb 0, #e3e3e0 9%, #ede3d5 23%, #f3e5d8 34%, #efe4d7 55%, #e5dfd7 78%, #dedcd6); font-family: Roboto, sans-serif; color: #222; }
.task { position: relative; width: 44px; height: 44px; flex: none; display: flex; align-items: center; justify-content: center; }
.apps { display: flex; align-items: center; }
.win-search { width: 218px; height: 32px; display: flex; align-items: center; gap: 9px; margin: 0 3px 0 4px; padding: 0 1px 0 8px; border: 1px solid #ddd4ca; border-radius: 16px; background: #fbf7f2; font-size: 14px; color: #555; }
.win-search span { flex: 1; text-align: left; }
.chat span { position: absolute; right: 4px; top: 5px; width: 16px; height: 16px; border-radius: 8px; background: #0078d4; color: #fff; font-size: 11px; line-height: 16px; }
.hp { width: 24px; height: 24px; background: #0796d6; color: #fff; font-size: 8px; line-height: 23px; font-style: italic; }
.hp b { font-size: 11px; }
.running::after { content: ""; position: absolute; bottom: 0; left: 19px; width: 6px; height: 3px; border-radius: 2px; background: #777; }
.active-app { width: 38px; height: 38px; margin: 0 3px; border-radius: 4px; background: #f8f1e9; box-shadow: 0 0 1px #bbb; }
.active-app::after { content: ""; position: absolute; bottom: 0; left: 11px; width: 16px; height: 3px; border-radius: 2px; background: #0078d4; }
.tableau-tile { width: 22px; height: 24px; display: flex; align-items: center; justify-content: center; background: #fff; box-shadow: 1px 1px 1px #ccc; }
.tray { display: flex; align-items: center; justify-content: flex-end; padding-right: 18px; }
.chevron { width: 32px; display: flex; justify-content: center; }
.sync { width: 32px; display: flex; justify-content: center; }
.lang { width: 46px; font-size: 11px; }
.net { display: flex; align-items: center; gap: 7px; margin-left: 6px; }
.clock { margin: 0 10px 0 16px; min-width: 64px; font-size: 12px; text-align: right; }
.count { width: 19px; height: 19px; border-radius: 10px; background: #005fb8; color: #fff; font-size: 10px; text-align: center; }
```
